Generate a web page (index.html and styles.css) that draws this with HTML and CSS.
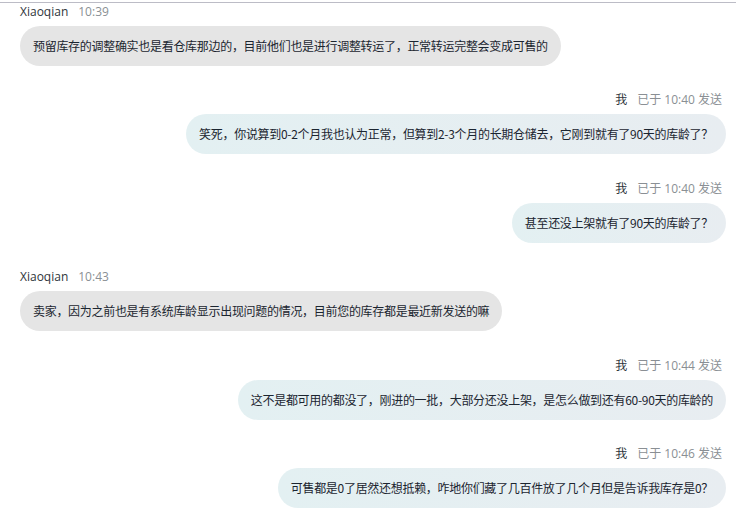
FILE: index.html
```html
<!DOCTYPE html>
<html lang="zh-CN">
<head>
<meta charset="utf-8">
<title>Chat</title>
<link rel="stylesheet" href="styles.css">
</head>
<body>
<div class="chat">
  <div class="msg left">
    <div class="meta"><span class="name">Xiaoqian</span><span class="time">10:39</span></div>
    <div class="bubble">预留库存的调整确实也是看仓库那边的，目前他们也是进行调整转运了，正常转运完整会变成可售的</div>
  </div>
  <div class="msg right">
    <div class="meta"><span class="name">我</span><span class="time">已于 10:40 发送</span></div>
    <div class="bubble">笑死，你说算到0-2个月我也认为正常，但算到2-3个月的长期仓储去，它刚到就有了90天的库龄了？</div>
  </div>
  <div class="msg right">
    <div class="meta"><span class="name">我</span><span class="time">已于 10:40 发送</span></div>
    <div class="bubble">甚至还没上架就有了90天的库龄了？</div>
  </div>
  <div class="msg left">
    <div class="meta"><span class="name">Xiaoqian</span><span class="time">10:43</span></div>
    <div class="bubble">卖家，因为之前也是有系统库龄显示出现问题的情况，目前您的库存都是最近新发送的嘛</div>
  </div>
  <div class="msg right">
    <div class="meta"><span class="name">我</span><span class="time">已于 10:44 发送</span></div>
    <div class="bubble">这不是都可用的都没了，刚进的一批，大部分还没上架，是怎么做到还有60-90天的库龄的</div>
  </div>
  <div class="msg right">
    <div class="meta"><span class="name">我</span><span class="time">已于 10:46 发送</span></div>
    <div class="bubble">可售都是0了居然还想抵赖，咋地你们藏了几百件放了几个月但是告诉我库存是0？</div>
  </div>
</div>
</body>
</html>
```

FILE: styles.css
```css
html, body {
  margin: 0;
  padding: 0;
  background: #ffffff;
}
body {
  font-family: "Open Sans", "Noto Sans CJK SC", sans-serif;
  color: #1b2530;
}
.chat {
  margin-top: 2px;
  border-top: 1px solid #bcbcc6;
  padding: 1px 10px 0 20px;
  display: flex;
  flex-direction: column;
}
.msg {
  display: flex;
  flex-direction: column;
  gap: 6px;
  margin-bottom: 26.4px;
}
.msg.left { align-items: flex-start; }
.msg.right { align-items: flex-end; }
.meta {
  display: flex;
  gap: 10px;
  font-size: 12px;
  line-height: 16px;
  height: 16px;
}
.msg.right .meta { padding-right: 4px; }
.meta .name { color: #2e353b; }
.meta .time { color: #8a8f94; }
.bubble {
  font-family: "Noto Sans CJK SC", sans-serif;
  font-size: 12px;
  letter-spacing: -0.3px;
  line-height: 20px;
  padding: 10px 13px;
  border-radius: 20px;
  white-space: nowrap;
}
.msg.left .bubble { background: #e5e5e5; }
.msg.right .bubble { background: linear-gradient(to right, #e3f0f2, #e8edf1); }
```
